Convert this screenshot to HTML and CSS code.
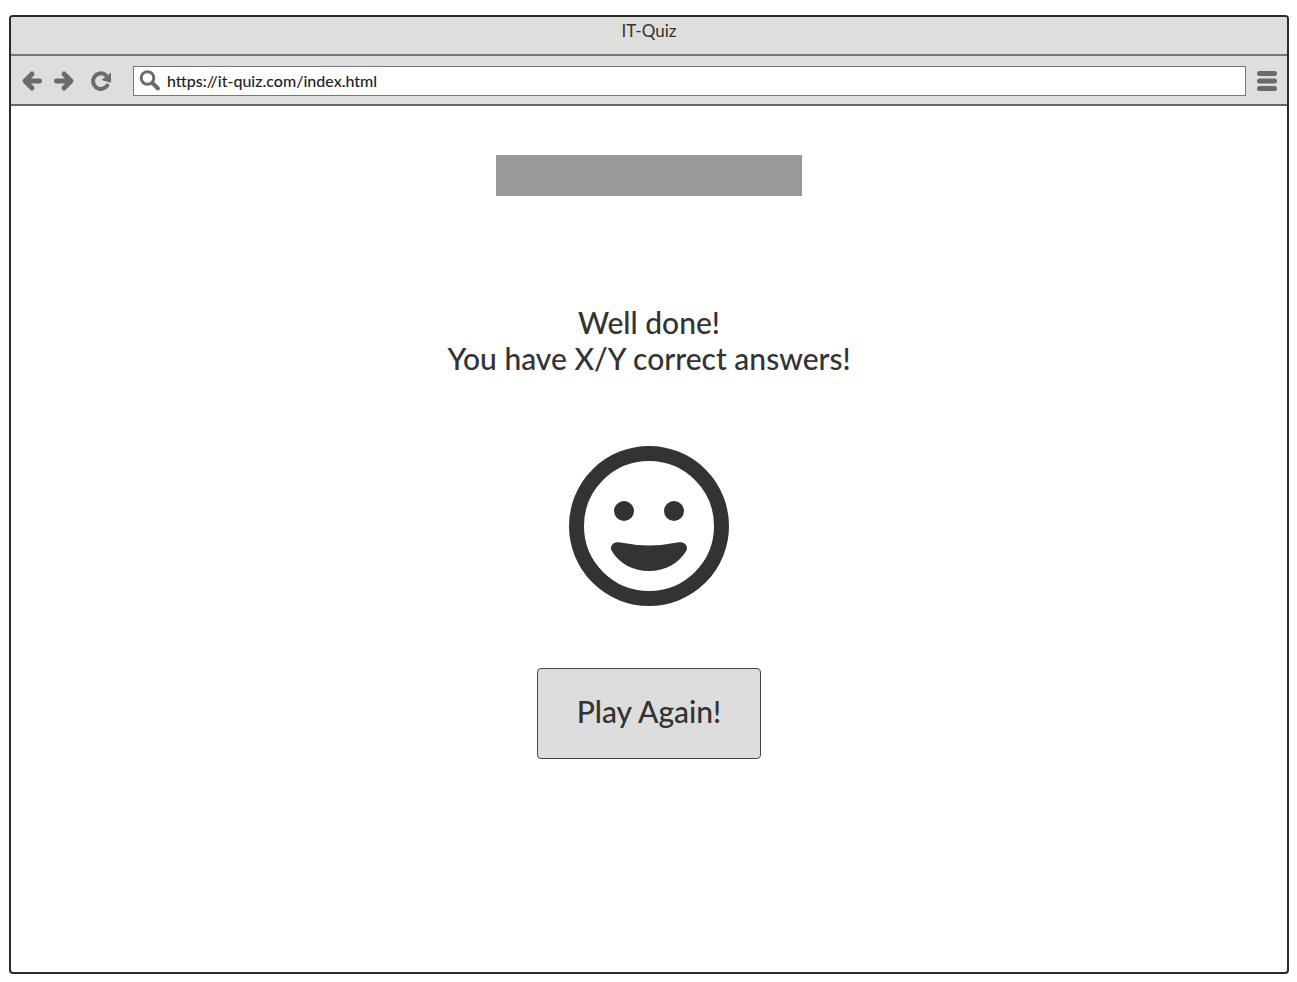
FILE: index.html
```html
<!DOCTYPE html>
<html lang="en">
<head>
<meta charset="utf-8">
<meta name="viewport" content="width=device-width, initial-scale=1">
<title>IT-Quiz</title>
<link rel="stylesheet" href="styles.css">
</head>
<body>
<div class="browser">
  <header class="chrome">
    <div class="titlebar">IT-Quiz</div>
    <nav class="toolbar" aria-label="Browser">
      <button class="tool" type="button" aria-label="Back">
        <svg viewBox="0 0 22 22"><path d="M18.500 11H4.500M11 4L4 11l7 7"/></svg>
      </button>
      <button class="tool" type="button" aria-label="Forward">
        <svg viewBox="0 0 22 22"><path d="M3.500 11H17.500M11 4l7 7-7 7"/></svg>
      </button>
      <button class="tool tool-reload" type="button" aria-label="Reload">
        <svg viewBox="0 0 22 22"><path class="thin" d="M17.300 15.500A7.800 7.800 0 1 1 15.500 4.900"/><path class="solid" d="M21 2.500V12.800L11.500 10Z"/></svg>
      </button>
      <div class="address">
        <svg class="search" viewBox="0 0 22 22" aria-hidden="true"><circle cx="8.500" cy="8" r="6.300"/><path class="handle" d="M13.500 13l5.500 5.500"/></svg>
        <input class="url" type="text" aria-label="Address" value="https://it-quiz.com/index.html" spellcheck="false">
      </div>
      <button class="tool tool-menu" type="button" aria-label="Menu">
        <svg viewBox="0 0 22 22"><path d="M3.500 3.500h15M3.500 11h15M3.500 18.500h15"/></svg>
      </button>
    </nav>
  </header>
  <main class="page">
    <div class="banner"></div>
    <p class="result">Well done!<br>You have X/Y correct answers!</p>
    <svg class="smiley" viewBox="0 0 160 160" role="img" aria-label="Smiling face">
      <circle class="ring" cx="80" cy="80" r="72.500"/>
      <circle cx="55" cy="65" r="10"/>
      <circle cx="105" cy="65" r="10"/>
      <path d="M50 96.300Q80 102.500 110 96.300C115.500 95.200 119.500 100 117.500 104.500C110 117 97 125 80 125S50 117 42.500 104.500C40.500 100 44.500 95.200 50 96.300Z"/>
    </svg>
    <button class="play" type="button">Play Again!</button>
  </main>
</div>
</body>
</html>
```

FILE: styles.css
```css
* {
  box-sizing: border-box;
}

body {
  display: flex;
  min-height: 100vh;
  margin: 0;
  padding: 15px 8px 8px 9px;
  background: #fff;
  color: #333;
  font-family: Lato, "Open Sans", sans-serif;
}

.browser {
  display: flex;
  flex: 1;
  flex-direction: column;
  overflow: hidden;
  border: 2px solid #2b2a2b;
  border-radius: 4px;
}

.chrome {
  background: #dededd;
}

.titlebar {
  height: 39px;
  padding-top: 4px;
  border-bottom: 2px solid #777;
  font-size: 17px;
  line-height: 20px;
  text-align: center;
}

.toolbar {
  display: flex;
  align-items: center;
  height: 50px;
  padding: 2px 9px 0 10px;
  gap: 10px;
  border-bottom: 2px solid #666;
}

.tool {
  flex: none;
  width: 22px;
  height: 22px;
  padding: 0;
  border: 0;
  background: none;
}

.tool svg,
.search {
  display: block;
  width: 22px;
  height: 22px;
  fill: none;
  stroke: #6b6b6b;
  stroke-width: 5;
  stroke-linecap: round;
  stroke-linejoin: round;
}

.tool .thin {
  stroke-width: 4;
}

.tool .solid {
  fill: #6b6b6b;
  stroke: none;
}

.tool-reload {
  margin: 0 11px 0 5px;
}

.address {
  display: flex;
  flex: 1;
  align-items: center;
  height: 30px;
  padding-left: 5px;
  gap: 6px;
  border: 1px solid #777;
  background: #fff;
}

.search {
  flex: none;
  stroke-width: 3;
}

.search .handle {
  stroke-width: 4;
}

.url {
  flex: 1;
  min-width: 0;
  padding: 0;
  border: 0;
  outline: 0;
  background: none;
  color: #222;
  font: 500 16px/24px Lato, "Open Sans", sans-serif;
}

.page {
  display: flex;
  flex: 1;
  flex-direction: column;
  align-items: center;
  padding: 49px 0;
}

.banner {
  width: 24%;
  height: 41px;
  background: #999;
}

.result {
  margin: 108px 0 70px;
  font-size: 30px;
  font-weight: 500;
  line-height: 36px;
  text-align: center;
}

.smiley {
  width: 160px;
  height: 160px;
  fill: #333;
}

.ring {
  fill: none;
  stroke: #333;
  stroke-width: 15;
}

.play {
  margin-top: 62px;
  padding: 24px 39px 29px;
  border: 1px solid #444;
  border-radius: 4px;
  background: #ddd;
  color: #333;
  font: 500 30px/36px Lato, "Open Sans", sans-serif;
}
```
